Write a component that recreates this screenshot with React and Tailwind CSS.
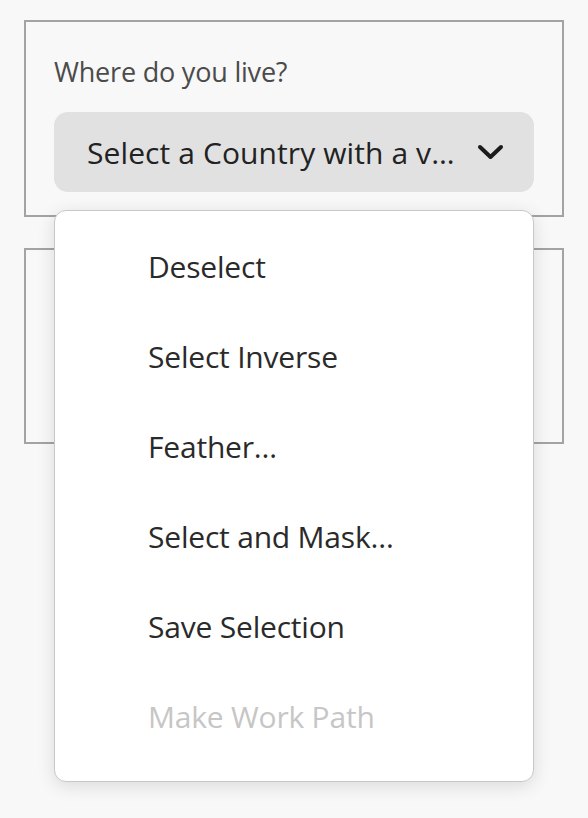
import React from "react";

const items = [
  { label: "Deselect" },
  { label: "Select Inverse" },
  { label: "Feather…" },
  { label: "Select and Mask…" },
  { label: "Save Selection" },
  { label: "Make Work Path", disabled: true },
];

export default function App() {
  return (
    <div
      className="relative w-[588px] h-[818px] bg-[#f8f8f8] overflow-hidden"
      style={{ fontFamily: '"Open Sans", "Noto Sans", sans-serif' }}
    >
      <div className="flex flex-col gap-[31px] pt-[20px] px-[24px]">
        <div className="h-[197px] border-2 border-[#a3a3a3] px-[28px] pt-[32px]">
          <div className="text-[27px] leading-[36px] text-[#4b4b4b] tracking-[-0.2px]">
            Where do you live?
          </div>
          <button className="mt-[22px] w-[480px] h-[80px] rounded-[14px] bg-[#e1e1e1] flex items-center pl-[33px] pr-[30px] text-[#222]">
            <span className="flex-1 text-left text-[30px] leading-[40px] mt-[2px] tracking-[0.1px]">
              Select a Country with a v…
            </span>
            <svg width="27" height="18" viewBox="0 0 27 18" fill="none">
              <path d="M3 4 L13.5 14 L24 4" stroke="#1b1b1b" strokeWidth="4" strokeLinecap="round" strokeLinejoin="round" />
            </svg>
          </button>
        </div>
        <div className="h-[196px] border-2 border-[#a3a3a3]" />
      </div>

      <div className="absolute left-[54px] top-[210px] w-[480px] h-[572px] bg-white border border-[#c8c8c8] rounded-[12px] shadow-[0_4px_18px_rgba(0,0,0,0.12)] pt-[10px]">
        {items.map((it) => (
          <div
            key={it.label}
            className={`h-[90px] flex items-center pl-[93px] text-[30px] tracking-[-0.2px] ${
              it.disabled ? "text-[#c6c6c6]" : "text-[#2a2a2a]"
            }`}
          >
            {it.label}
          </div>
        ))}
      </div>
    </div>
  );
}
